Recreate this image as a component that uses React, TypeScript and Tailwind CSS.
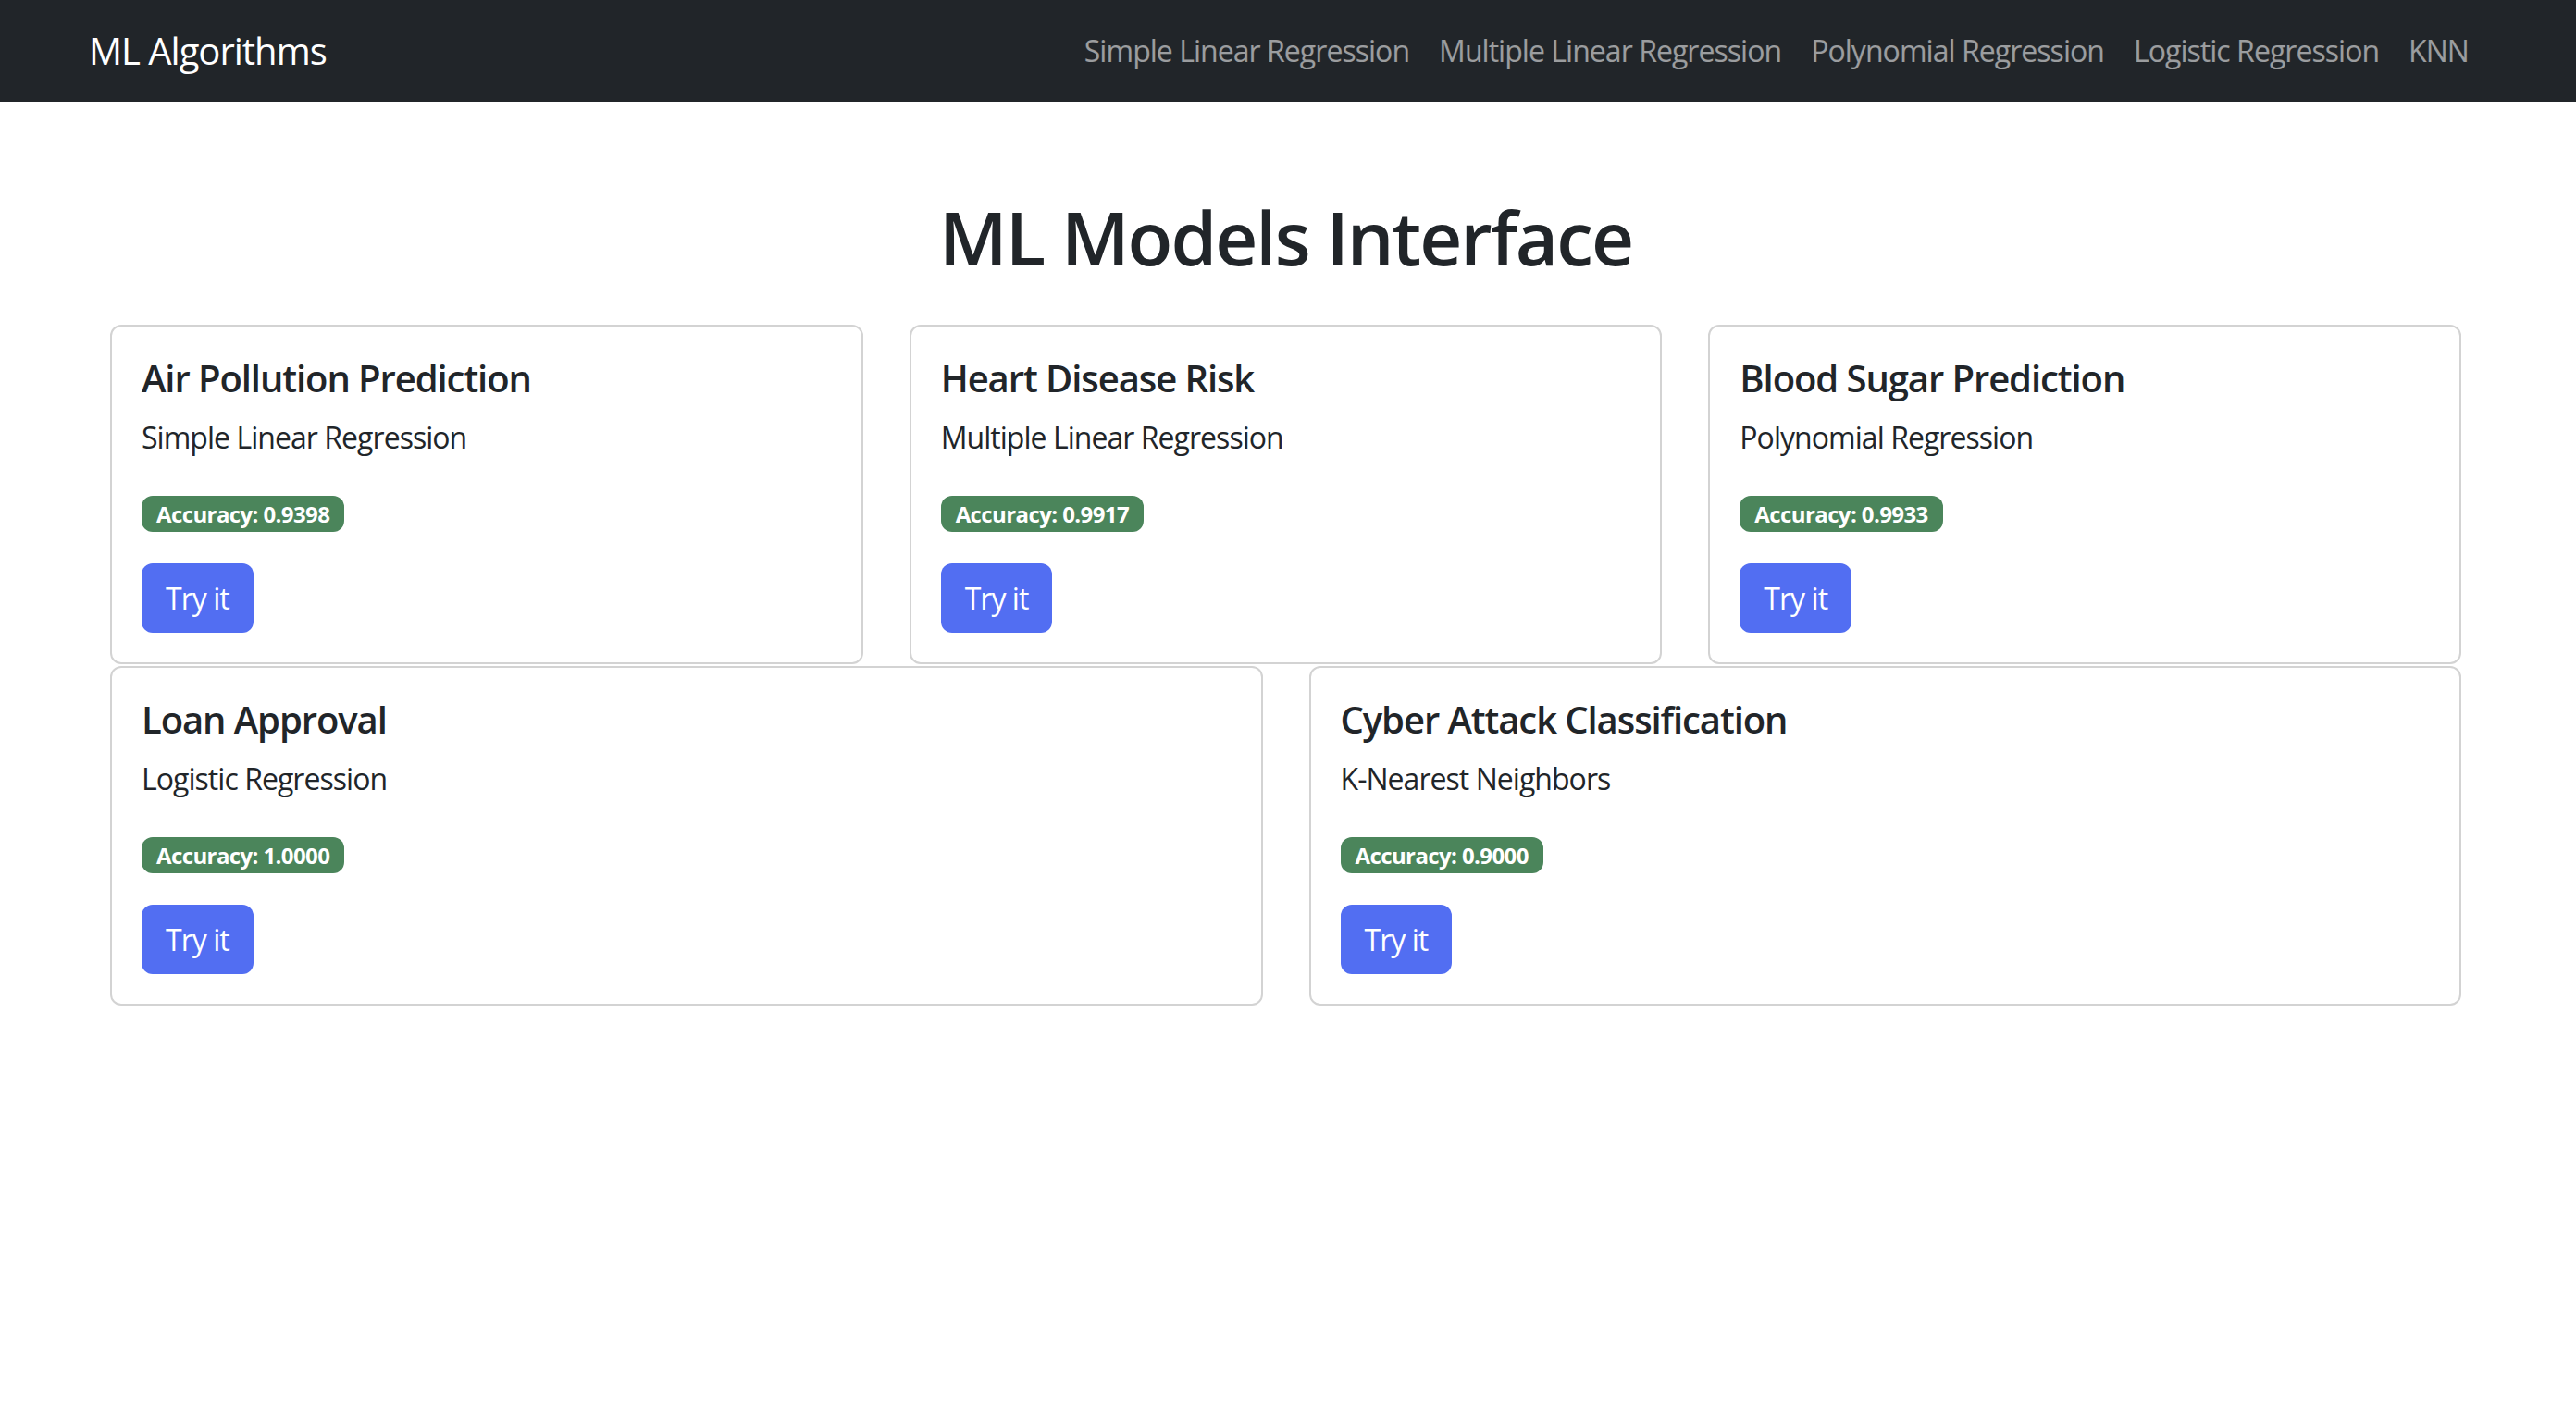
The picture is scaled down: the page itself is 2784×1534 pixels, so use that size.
import React from 'react';

type Model = {
  title: string;
  algo: string;
  accuracy: string;
};

const topRow: Model[] = [
  { title: 'Air Pollution Prediction', algo: 'Simple Linear Regression', accuracy: '0.9398' },
  { title: 'Heart Disease Risk', algo: 'Multiple Linear Regression', accuracy: '0.9917' },
  { title: 'Blood Sugar Prediction', algo: 'Polynomial Regression', accuracy: '0.9933' },
];

const bottomRow: Model[] = [
  { title: 'Loan Approval', algo: 'Logistic Regression', accuracy: '1.0000' },
  { title: 'Cyber Attack Classification', algo: 'K-Nearest Neighbors', accuracy: '0.9000' },
];

const navLinks = [
  'Simple Linear Regression',
  'Multiple Linear Regression',
  'Polynomial Regression',
  'Logistic Regression',
  'KNN',
];

const ModelCard: React.FC<{ model: Model }> = ({ model }) => (
  <div className="rounded-xl border-2 border-[#d3d3d3] bg-white p-8">
    <h5 className="mb-4 text-[40px] leading-[48px] font-semibold tracking-[-0.027em] text-[#212529]">
      {model.title}
    </h5>
    <p className="mb-8 text-[32px] leading-[48px] tracking-[-0.03em] text-[#212529]">{model.algo}</p>
    <div className="mb-8 flex h-[48px] items-center pt-[5px]">
      <span className="flex h-[39px] items-center rounded-xl bg-[#4b855b] px-4 text-[24px] font-bold tracking-[-0.025em] text-white">
        Accuracy: {model.accuracy}
      </span>
    </div>
    <button className="h-[75px] rounded-xl bg-[#526ef2] px-[26px] text-[32px] tracking-[-0.03em] text-white">
      Try it
    </button>
  </div>
);

export default function App() {
  return (
    <div className="min-h-screen bg-white font-['Open_Sans',sans-serif]">
      <nav className="flex h-[110px] items-center justify-between bg-[#212529] pl-[96px] pr-[100px]">
        <span className="text-[40px] tracking-[-0.025em] text-white">ML Algorithms</span>
        <div className="flex">
          {navLinks.map((link) => (
            <a key={link} href="#" className="px-4 text-[32px] tracking-[-0.03em] text-white/55">
              {link}
            </a>
          ))}
        </div>
      </nav>

      <div className="pl-[119px] pr-[124px]">
        <h1 className="mt-[98px] mb-[47px] text-center text-[80px] leading-[96px] font-semibold tracking-[-0.025em] text-[#212529]">
          ML Models Interface
        </h1>

        <div className="grid grid-cols-3 gap-x-[50px]">
          {topRow.map((m) => (
            <ModelCard key={m.title} model={m} />
          ))}
        </div>
        <div className="mt-[2px] grid grid-cols-2 gap-x-[50px]">
          {bottomRow.map((m) => (
            <ModelCard key={m.title} model={m} />
          ))}
        </div>
      </div>
    </div>
  );
}
